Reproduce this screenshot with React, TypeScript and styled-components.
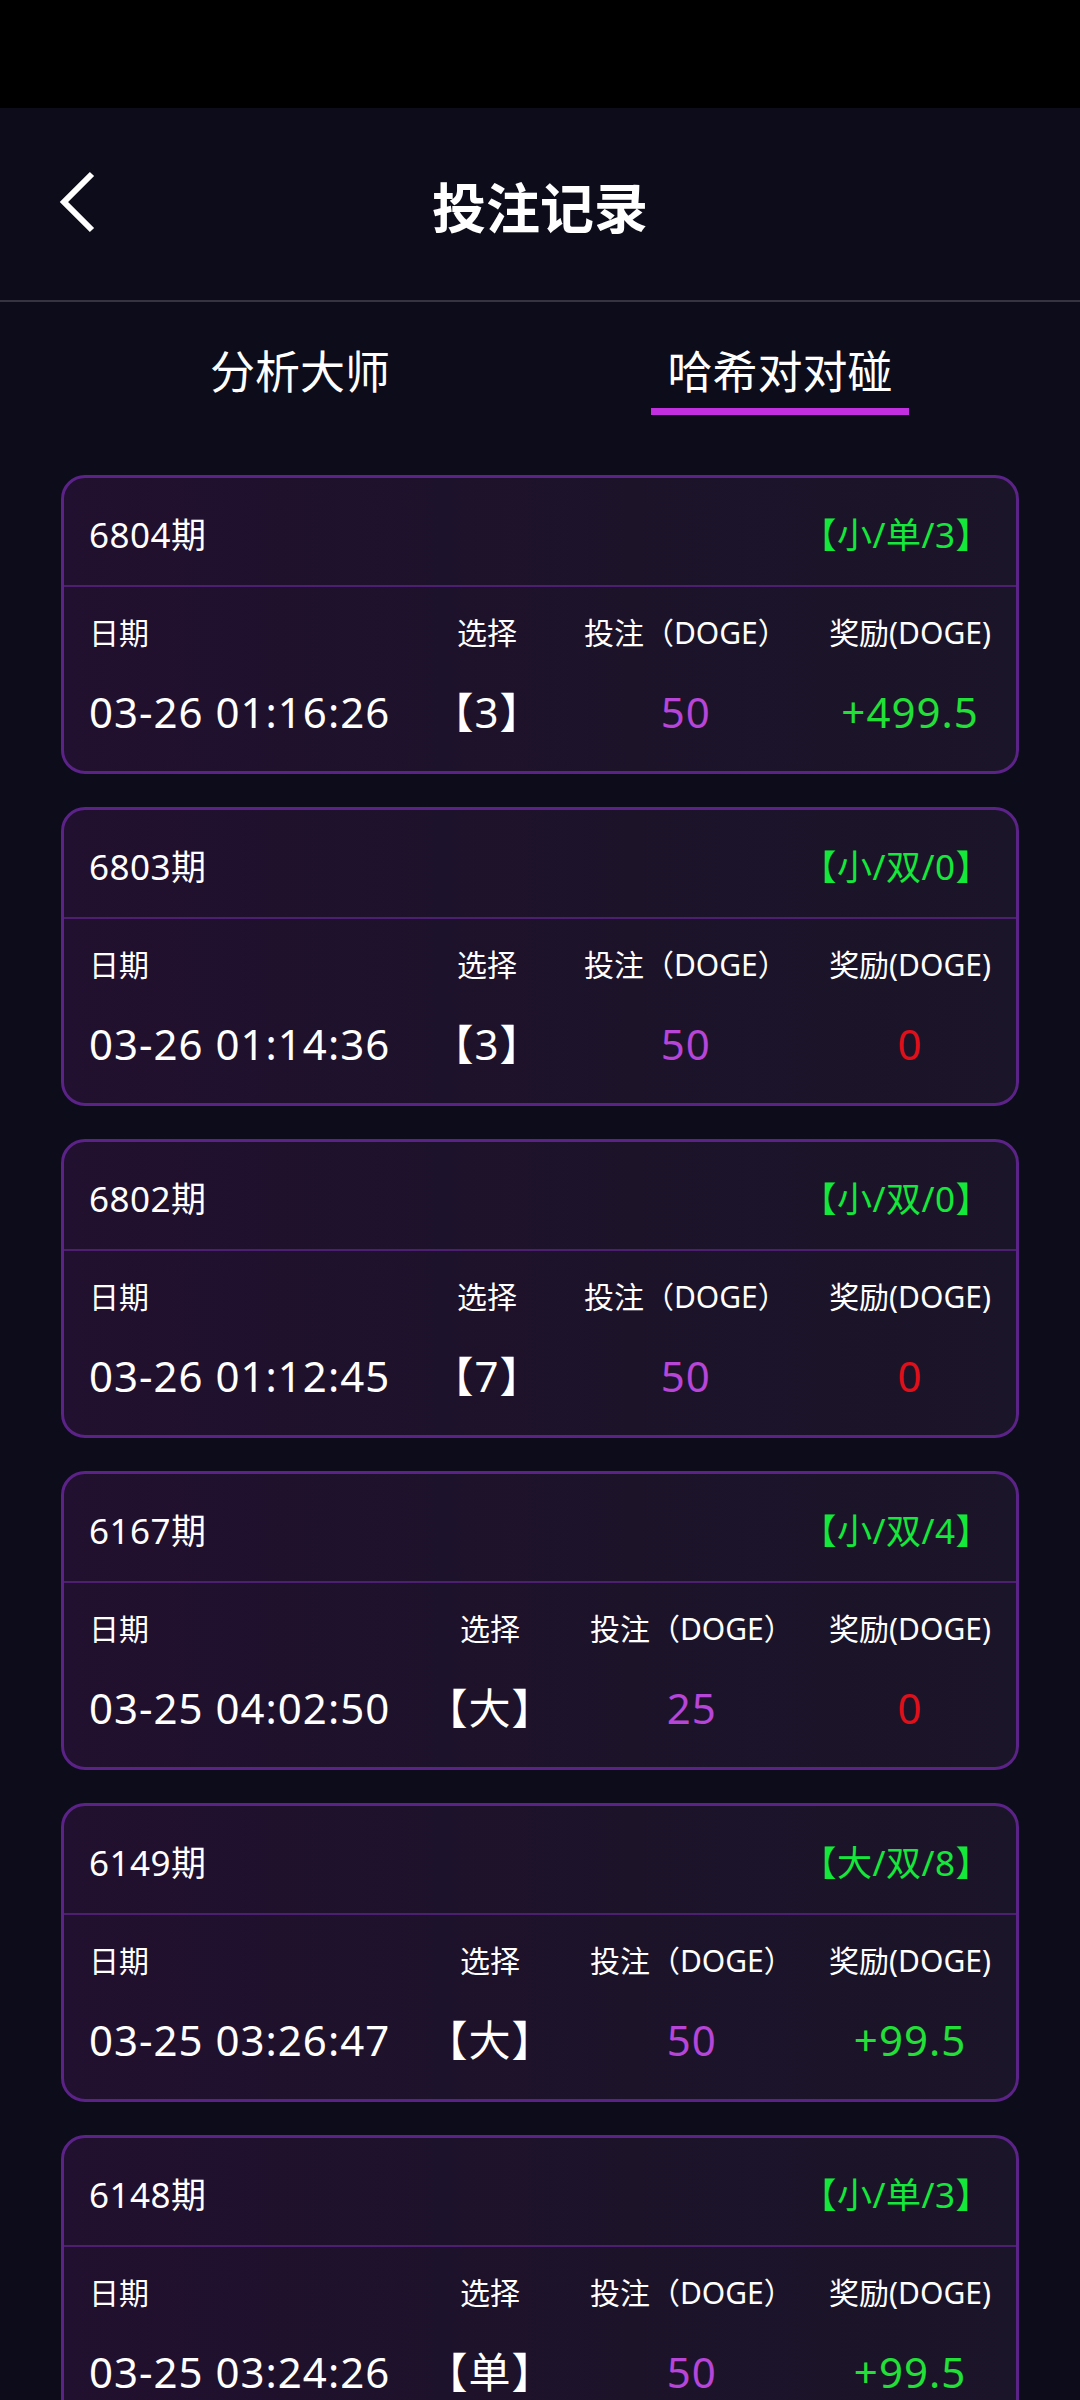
import React, { useState } from 'react'
import styled, { createGlobalStyle } from 'styled-components'

type Bet = {
  period: string
  result: string
  date: string
  choice: string
  amount: string
  reward: string
}

const bets: Bet[] = [
  { period: '6804期', result: '【小/单/3】', date: '03-26 01:16:26', choice: '【3】', amount: '50', reward: '+499.5' },
  { period: '6803期', result: '【小/双/0】', date: '03-26 01:14:36', choice: '【3】', amount: '50', reward: '0' },
  { period: '6802期', result: '【小/双/0】', date: '03-26 01:12:45', choice: '【7】', amount: '50', reward: '0' },
  { period: '6167期', result: '【小/双/4】', date: '03-25 04:02:50', choice: '【大】', amount: '25', reward: '0' },
  { period: '6149期', result: '【大/双/8】', date: '03-25 03:26:47', choice: '【大】', amount: '50', reward: '+99.5' },
  { period: '6148期', result: '【小/单/3】', date: '03-25 03:24:26', choice: '【单】', amount: '50', reward: '+99.5' },
]

const tabs = ['分析大师', '哈希对对碰']

function App() {
  const [active, setActive] = useState(1)

  return (
    <Page>
      <GlobalStyle />
      <StatusBar />
      <Header>
        <BackButton aria-label="back">
          <svg width="40" height="62" viewBox="0 0 40 62">
            <path d="M33 3 L5 31 L33 59" fill="none" stroke="#fff" strokeWidth="6" />
          </svg>
        </BackButton>
        <Title>投注记录</Title>
        <span />
      </Header>
      <Tabs>
        {tabs.map((t, i) => (
          <Tab key={t} onClick={() => setActive(i)}>
            <TabLabel>{t}</TabLabel>
            <Underline $active={i === active} />
          </Tab>
        ))}
      </Tabs>
      <List>
        {bets.map((b) => (
          <Card key={b.period}>
            <CardHead>
              <Period>{b.period}</Period>
              <ResultTag>{b.result}</ResultTag>
            </CardHead>
            <CardBody>
              <Column $align="flex-start">
                <Label>日期</Label>
                <Value>{b.date}</Value>
              </Column>
              <Column>
                <Label>选择</Label>
                <Value>{b.choice}</Value>
              </Column>
              <Column>
                <Label>投注（DOGE）</Label>
                <Value $color="#b645d8">{b.amount}</Value>
              </Column>
              <Column>
                <Label>奖励(DOGE)</Label>
                <Value $color={b.reward === '0' ? '#e0101a' : '#22e038'}>{b.reward}</Value>
              </Column>
            </CardBody>
          </Card>
        ))}
      </List>
    </Page>
  )
}

const GlobalStyle = createGlobalStyle`
  html, body {
    margin: 0;
    padding: 0;
    background: #0d0c1a;
  }
  * {
    box-sizing: border-box;
  }
`

const Page = styled.div`
  width: 1080px;
  min-height: 2400px;
  background: #0d0c1a;
  color: #fff;
  font-family: "Noto Sans", "Noto Sans CJK SC", sans-serif;
`

const StatusBar = styled.div`
  height: 108px;
  background: #000;
`

const Header = styled.div`
  height: 194px;
  display: grid;
  grid-template-columns: 140px 1fr 140px;
  align-items: center;
  border-bottom: 2px solid #35343f;
`

const BackButton = styled.button`
  background: none;
  border: none;
  padding: 0 0 4px 59px;
  display: flex;
  align-items: center;
  cursor: pointer;
`

const Title = styled.h1`
  margin: 0;
  text-align: center;
  font-family: "Noto Sans CJK SC", sans-serif;
  font-size: 54px;
  font-weight: 700;
  line-height: 1;
  padding-top: 4px;
`

const Tabs = styled.div`
  display: grid;
  grid-template-columns: 1fr 1fr;
  padding: 0 60px;
`

const Tab = styled.div`
  display: flex;
  flex-direction: column;
  align-items: center;
  padding-top: 42px;
  cursor: pointer;
`

const TabLabel = styled.span`
  font-family: "Noto Sans CJK SC", sans-serif;
  font-size: 45px;
  line-height: 52px;
`

const Underline = styled.div<{ $active: boolean }>`
  width: 258px;
  height: 7px;
  margin-top: 12px;
  background: ${(p) => (p.$active ? '#c22fe0' : 'transparent')};
`

const List = styled.div`
  display: flex;
  flex-direction: column;
  gap: 33px;
  padding: 60px 61px 40px;
`

const Card = styled.div`
  border: 3px solid #5b2387;
  border-radius: 24px;
  background: linear-gradient(90deg, #21102f 0%, #1c1329 60%, #1b1529 100%);
  overflow: hidden;
`

const CardHead = styled.div`
  height: 109px;
  display: flex;
  align-items: center;
  justify-content: space-between;
  padding: 2px 25px 0;
  border-bottom: 2px solid #4c1f70;
`

const Period = styled.span`
  font-size: 35px;
  letter-spacing: 0.5px;
`

const ResultTag = styled.span`
  font-size: 35px;
  letter-spacing: 0.5px;
  color: #14e83a;
`

const CardBody = styled.div`
  display: flex;
  justify-content: space-between;
  padding: 26px 25px 30px;
`

const Column = styled.div<{ $align?: string }>`
  display: flex;
  flex-direction: column;
  align-items: ${(p) => p.$align || 'center'};
  gap: 30px;
`

const Label = styled.span`
  font-size: 30px;
  line-height: 40px;
  white-space: nowrap;
`

const Value = styled.span<{ $color?: string }>`
  font-size: 42px;
  line-height: 58px;
  letter-spacing: 1px;
  white-space: nowrap;
  color: ${(p) => p.$color || '#fff'};
`

export default App
